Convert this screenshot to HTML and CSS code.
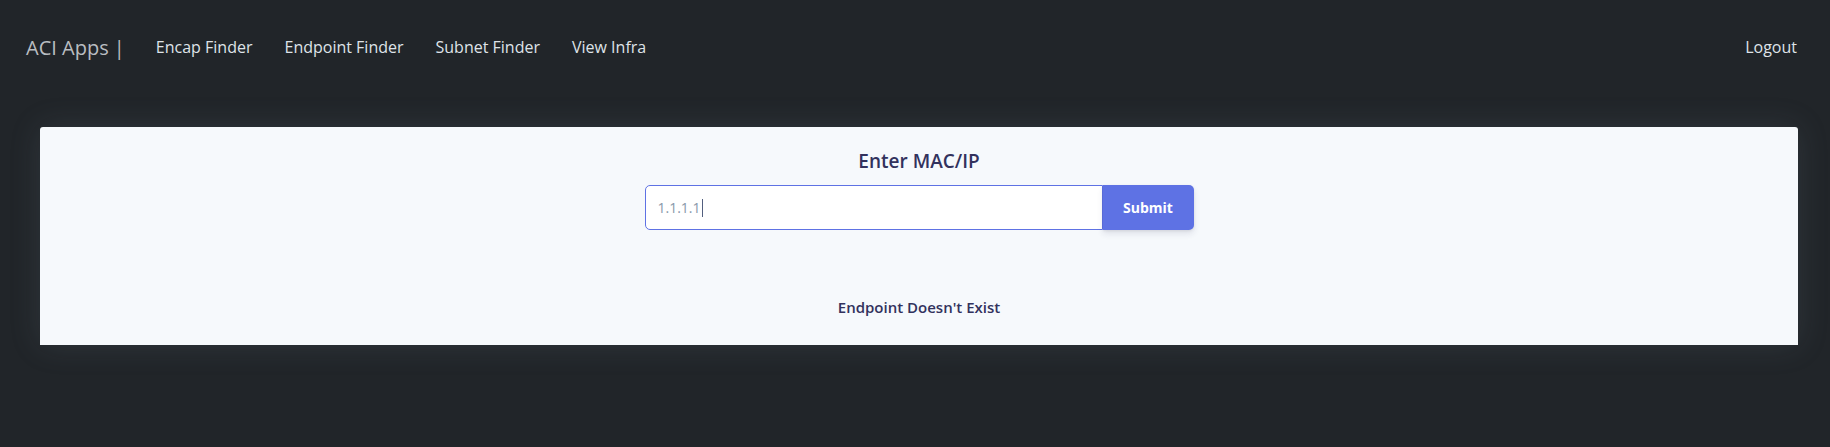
FILE: index.html
```html
<!DOCTYPE html>
<html lang="en">
<head>
<meta charset="utf-8">
<title>ACI Apps</title>
<link rel="stylesheet" href="styles.css">
</head>
<body>
<nav class="navbar">
  <div class="nav-left">
    <a class="brand" href="#">ACI Apps |</a>
    <a class="nav-link" href="#">Encap Finder</a>
    <a class="nav-link" href="#">Endpoint Finder</a>
    <a class="nav-link" href="#">Subnet Finder</a>
    <a class="nav-link" href="#">View Infra</a>
  </div>
  <a class="nav-link logout" href="#">Logout</a>
</nav>
<main class="main">
  <section class="card">
    <h3 class="title">Enter MAC/IP</h3>
    <form class="search">
      <div class="field"><span class="value">1.1.1.1</span><span class="caret"></span></div>
      <button type="button" class="btn">Submit</button>
    </form>
    <p class="result">Endpoint Doesn't Exist</p>
  </section>
</main>
</body>
</html>
```

FILE: styles.css
```css
html, body {
  margin: 0;
  padding: 0;
  background: #212529;
  font-family: "Open Sans", "Noto Sans", sans-serif;
  height: 100%;
}

.navbar {
  display: flex;
  align-items: center;
  justify-content: space-between;
  height: 94px;
  padding: 0 33px 0 26px;
  box-sizing: border-box;
}

.nav-left {
  display: flex;
  align-items: center;
}

.brand {
  color: #b9bdc1;
  font-size: 20px;
  text-decoration: none;
  margin-right: 15px;
}

.nav-link {
  color: #dfe3e8;
  font-size: 16px;
  text-decoration: none;
  padding: 0 16px;
}

.logout {
  padding: 0;
}

.main {
  padding: 33px 32px 0 40px;
}

.card {
  background: #f6f9fc;
  border-radius: 3px 3px 0 0;
  box-shadow: 0 0 2rem 0 rgba(136, 152, 170, 0.15);
  height: 218px;
  box-sizing: border-box;
  padding-top: 20px;
  display: flex;
  flex-direction: column;
  align-items: center;
}

.title {
  margin: 0;
  color: #32325d;
  font-size: 19px;
  font-weight: 600;
  line-height: 28px;
}

.search {
  display: flex;
  width: 549px;
  margin-top: 10px;
}

.field {
  flex: 1;
  height: 45px;
  box-sizing: border-box;
  background: #fff;
  border: 1px solid #5e72e4;
  border-radius: 5px 0 0 5px;
  display: flex;
  align-items: center;
  padding-left: 12px;
  font-size: 14px;
  color: #8898aa;
}

.caret {
  display: inline-block;
  width: 1px;
  height: 18px;
  background: #525f7f;
  margin-left: 1px;
}

.btn {
  width: 91px;
  height: 45px;
  border: none;
  background: #5e72e4;
  color: #fff;
  font-family: "Open Sans", "Noto Sans", sans-serif;
  font-size: 14px;
  font-weight: 700;
  border-radius: 0 5px 5px 0;
  box-shadow: 0 4px 6px rgba(50, 50, 93, 0.11), 0 1px 3px rgba(0, 0, 0, 0.08);
}

.result {
  margin: 67px 0 0;
  color: #32325d;
  font-size: 15px;
  font-weight: 600;
}
```
